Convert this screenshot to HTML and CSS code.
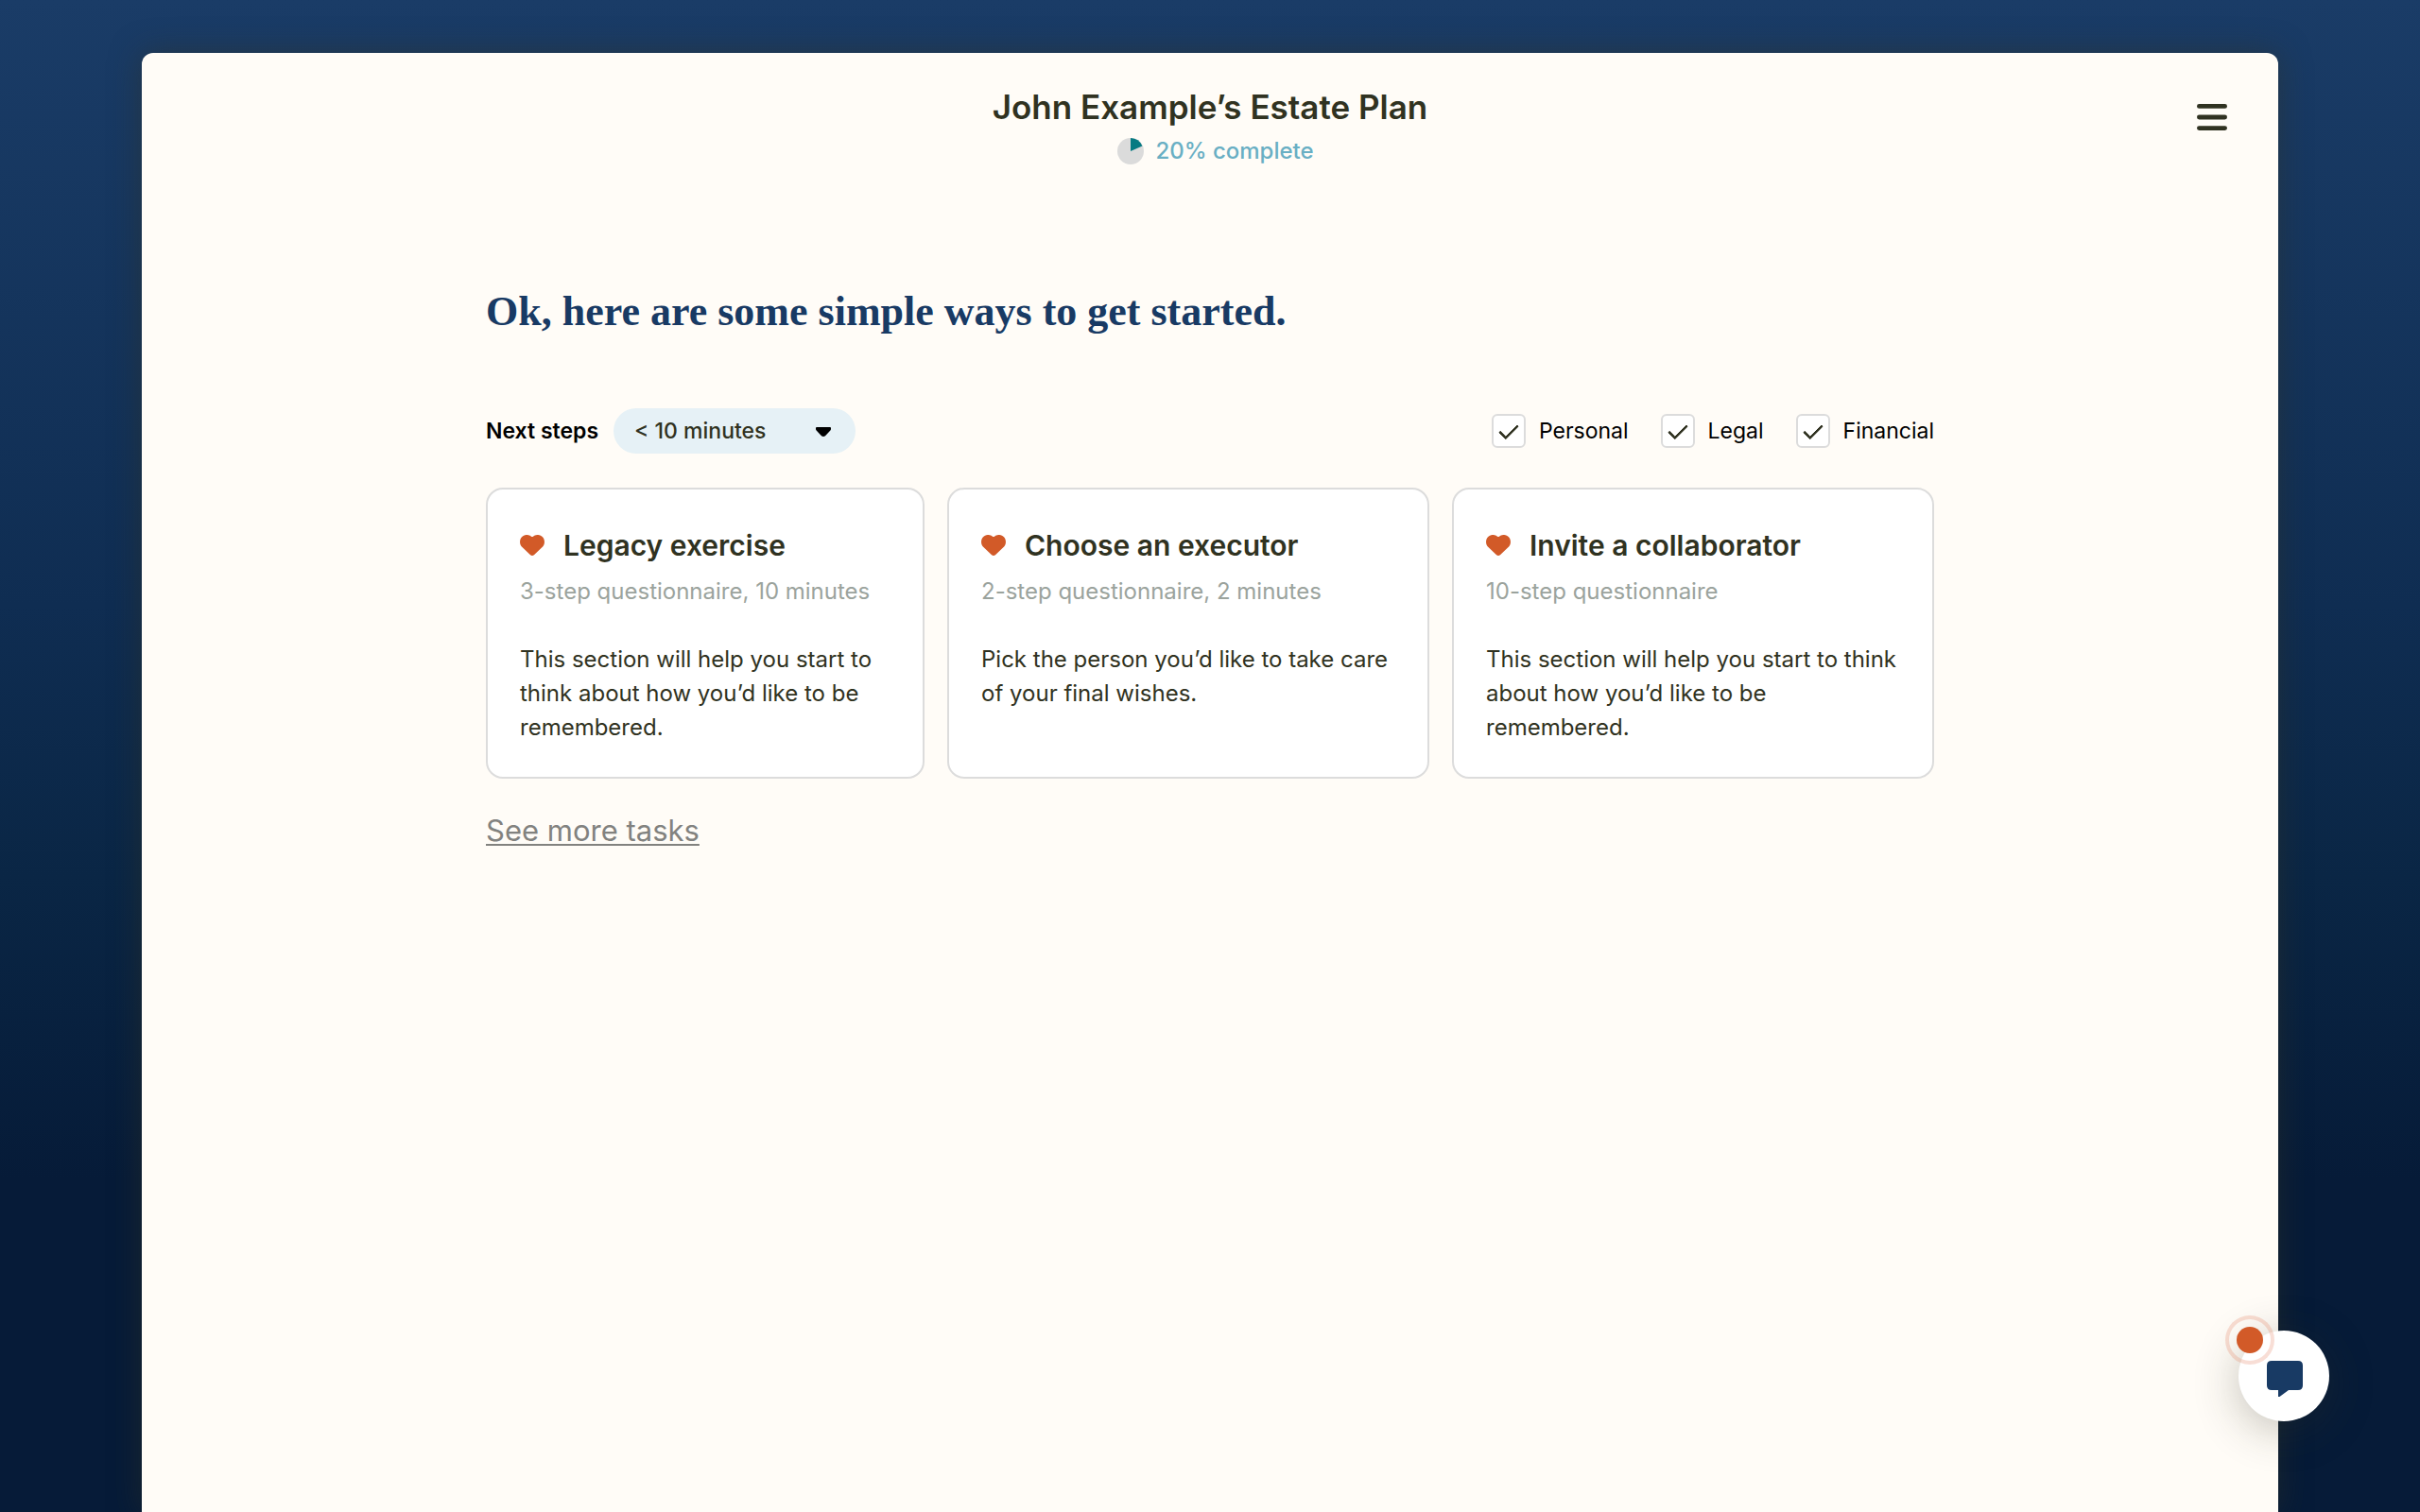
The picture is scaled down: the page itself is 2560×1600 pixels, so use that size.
FILE: index.html
```
<!DOCTYPE html>
<html lang="en">
<head>
<meta charset="utf-8">
<meta name="viewport" content="width=device-width, initial-scale=1">
<title>John Example’s Estate Plan</title>
<link rel="stylesheet" href="styles.css">
</head>
<body>
<svg class="sprite" aria-hidden="true">
  <symbol id="heart" viewBox="0 0 26 22">
    <path d="M10.800 21.100 1.900 12.400C-.5 9.900-.6 5.200 1.800 2.500 4.500-.6 9.100-.8 12 1.700q1 .7 2 0C16.900-.8 21.500-.6 24.200 2.500c2.400 2.700 2.300 7.400-.1 9.900L15.200 21.100q-2.200 1.800-4.400 0Z" fill="currentColor"/>
  </symbol>
</svg>
<div class="panel">
  <header class="header">
    <div class="plan">
      <h1 class="plan-title">John Example’s Estate Plan</h1>
      <p class="progress">
        <svg class="pie" viewBox="0 0 28 28" aria-hidden="true">
          <circle cx="14" cy="14" r="14" fill="#dbdbdb"/>
          <path d="M14 14V0a14 14 0 0 1 12.400 8.500Z" fill="#067a82"/>
        </svg>
        20% complete
      </p>
    </div>
    <button class="menu" type="button" aria-label="Menu">
      <svg width="32" height="28" viewBox="0 0 32 28" aria-hidden="true">
        <path d="M2.400 2.400h27.200M2.400 14h27.200M2.400 25.600h27.200" stroke="#303221" stroke-width="4.800" stroke-linecap="round"/>
      </svg>
    </button>
  </header>
  <main class="content">
    <h2 class="intro">Ok, here are some simple ways to get started.</h2>
    <form class="filters">
      <label class="filter-label" for="duration">Next steps</label>
      <div class="picker">
        <select class="duration" id="duration">
          <option>&lt; 10 minutes</option>
          <option>&lt; 30 minutes</option>
        </select>
        <svg class="caret" viewBox="0 0 16 10" aria-hidden="true"><path d="M1 0h14q1 0 1 1v1q0 .8-.6 1.400L10 9.200q-2 1.500-4 0L.6 3.400Q0 2.800 0 2V1q0-1 1-1Z"/></svg>
      </div>
      <div class="topics">
        <label class="topic"><input class="tick" type="checkbox" checked>Personal</label>
        <label class="topic"><input class="tick" type="checkbox" checked>Legal</label>
        <label class="topic"><input class="tick" type="checkbox" checked>Financial</label>
      </div>
    </form>
    <div class="cards">
      <article class="card">
        <h3 class="card-title"><svg class="heart" aria-hidden="true"><use href="#heart"/></svg>Legacy exercise</h3>
        <p class="card-meta">3-step questionnaire, 10 minutes</p>
        <p class="card-text">This section will help you start to think about how you’d like to be remembered.</p>
      </article>
      <article class="card">
        <h3 class="card-title"><svg class="heart" aria-hidden="true"><use href="#heart"/></svg>Choose an executor</h3>
        <p class="card-meta">2-step questionnaire, 2 minutes</p>
        <p class="card-text">Pick the person you’d like to take care of your final wishes.</p>
      </article>
      <article class="card">
        <h3 class="card-title"><svg class="heart" aria-hidden="true"><use href="#heart"/></svg>Invite a collaborator</h3>
        <p class="card-meta">10-step questionnaire</p>
        <p class="card-text">This section will help you start to think about how you’d like to be remembered.</p>
      </article>
    </div>
    <a class="more" href="#">See more tasks</a>
  </main>
</div>
<button class="chat" type="button" aria-label="Open chat">
  <svg width="38" height="38" viewBox="0 0 38 38" aria-hidden="true">
    <path d="M5 0h28q5 0 5 5v21q0 5-5 5H23l-9.500 7H12v-7H5q-5 0-5-5V5q0-5 5-5Z" fill="#183a64"/>
  </svg>
  <span class="badge"></span>
</button>
</body>
</html>
```
FILE: styles.css
```
*,
*::before {
  box-sizing: border-box;
}

body {
  display: flex;
  flex-direction: column;
  min-height: 100vh;
  margin: 0;
  padding: 56px 150px 0;
  background: linear-gradient(#1a3c67 0, #0f2d52 40%, #0a2645 58%, #061b38 78%, #061b38 100%) fixed;
  color: #303221;
  font: 24px/36px Inter, "Liberation Sans", sans-serif;
}

h1, h2, h3, p {
  margin: 0;
}

.sprite {
  position: absolute;
  width: 0;
  height: 0;
}

.panel {
  flex: 1;
  padding-bottom: 96px;
  border-radius: 12px 12px 0 0;
  background: #fffcf7;
  box-shadow: 0 0 32px rgba(50, 50, 33, 0.5);
}

.header {
  display: grid;
  grid-template-columns: 1fr auto 1fr;
  padding: 36px 54px 0;
}

.plan {
  grid-column: 2;
}

.plan-title {
  font-size: 35px;
  font-weight: 600;
  line-height: 42px;
}

.progress {
  display: flex;
  justify-content: center;
  align-items: center;
  gap: 12px;
  margin-top: 8px;
  padding-left: 12px;
  color: #69afc4;
  font-weight: 500;
}

.pie {
  width: 28px;
  height: 28px;
}

.menu {
  display: flex;
  justify-self: end;
  align-items: center;
  height: 64px;
  padding: 0;
  border: 0;
  background: none;
}

.content {
  max-width: 1532px;
  margin: 126px auto 0;
}

.intro {
  color: #183a64;
  font: 700 44px/52px "Liberation Serif", serif;
}

.filters {
  display: flex;
  align-items: center;
  margin: 76px 0 36px;
  color: #000;
  font-size: 23px;
}

.filter-label {
  margin-right: 16px;
  font-weight: 600;
}

.picker {
  position: relative;
}

.duration {
  width: 256px;
  height: 48px;
  padding: 0 48px 0 22px;
  border: 0;
  border-radius: 24px;
  background: #e6f1f6;
  color: #303221;
  font: inherit;
  font-weight: 500;
  appearance: none;
}

.caret {
  position: absolute;
  top: 20px;
  right: 26px;
  width: 16px;
  height: 10px;
  pointer-events: none;
}

.topics {
  display: flex;
  gap: 34px;
  margin-left: auto;
}

.topic {
  display: flex;
  align-items: center;
  gap: 14px;
}

.tick {
  display: grid;
  place-items: center;
  width: 36px;
  height: 36px;
  margin: 0;
  border: 2px solid #dcdcdc;
  border-radius: 6px;
  background: #fff;
  appearance: none;
}

.tick:checked::before {
  content: "";
  width: 20px;
  height: 11px;
  border: solid #303221;
  border-width: 0 0 3px 3px;
  border-radius: 1px;
  transform: translateY(-2px) rotate(-45deg);
}

.cards {
  display: grid;
  grid-template-columns: 464fr 510fr 510fr;
  gap: 24px;
}

.card {
  padding: 40px 34px 34px;
  border: 2px solid #dcdcdc;
  border-radius: 18px;
  background: #fff;
}

.card-title {
  display: flex;
  align-items: center;
  gap: 20px;
  font-size: 30px;
  font-weight: 600;
  line-height: 38px;
}

.heart {
  width: 26px;
  height: 22px;
  color: #d25a28;
}

.card-meta {
  margin: 12px 0 36px;
  color: #9ba39d;
}

.more {
  display: inline-block;
  margin-top: 36px;
  color: #82827f;
  font-size: 31px;
  line-height: 38px;
  text-decoration-thickness: 2px;
  text-underline-offset: 3px;
  text-decoration-skip-ink: none;
}

.chat {
  position: fixed;
  right: 96px;
  bottom: 96px;
  display: grid;
  place-items: center;
  width: 96px;
  height: 96px;
  padding: 6px 2px 0 4px;
  border: 0;
  border-radius: 50%;
  background: #fff;
  box-shadow: 0 8px 48px rgba(50, 50, 33, 0.3);
}

.badge {
  position: absolute;
  top: -16px;
  left: -14px;
  width: 52px;
  height: 52px;
  padding: 8px;
  border: 4px solid rgba(226, 122, 92, 0.25);
  border-radius: 50%;
  background: #d25a28 content-box;
}
```
